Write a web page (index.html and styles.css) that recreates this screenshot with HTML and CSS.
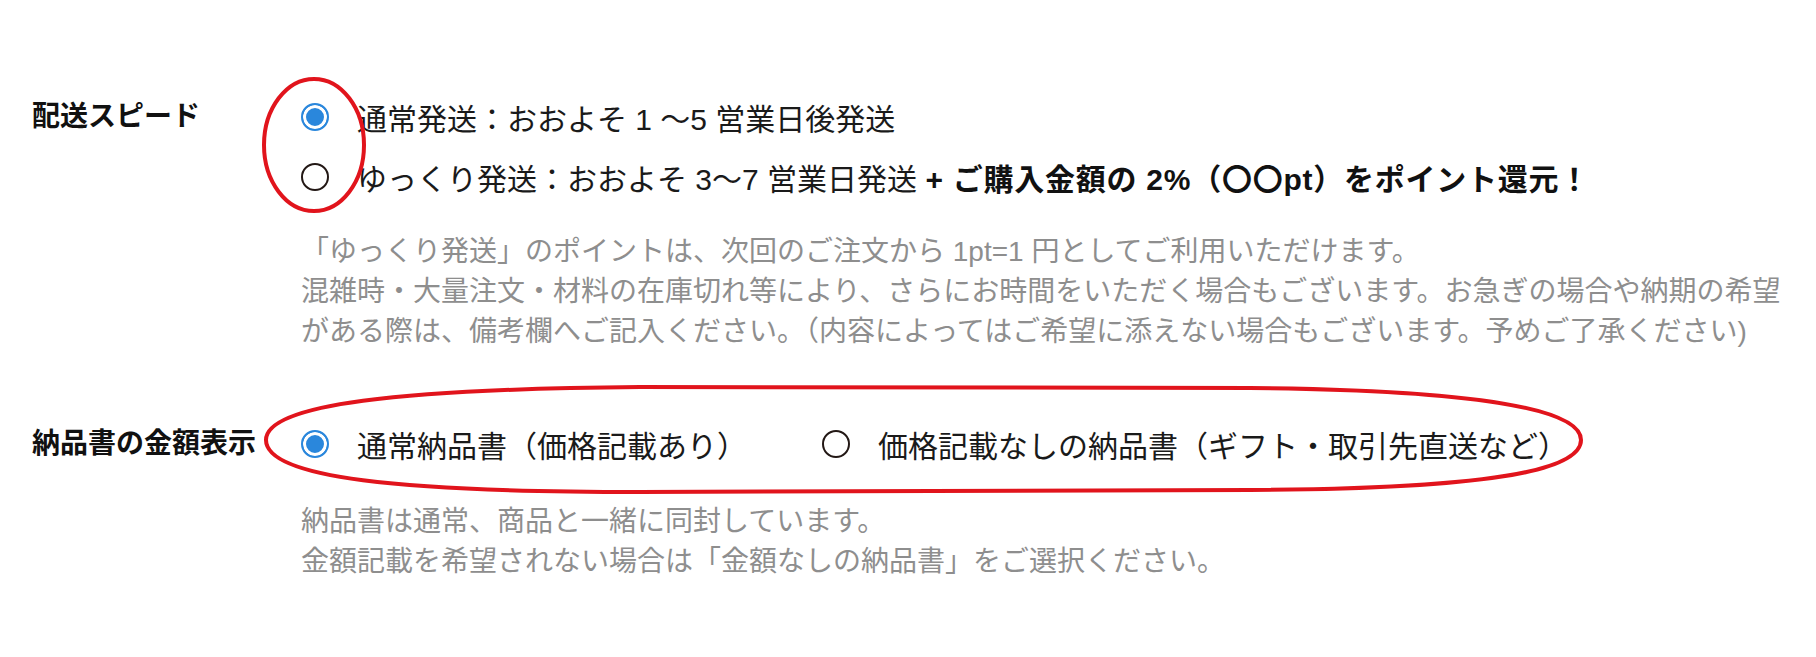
FILE: index.html
```html
<!DOCTYPE html>
<html lang="ja">
<head>
<meta charset="utf-8">
<title>配送オプション</title>
<link rel="stylesheet" href="styles.css">
</head>
<body>
<div class="page">
  <section class="field field-speed">
    <div class="label">配送スピード</div>
    <div class="content">
      <div class="options options-stack">
        <label class="opt"><input type="radio" name="speed" class="radio" checked><span class="txt">通常発送：おおよそ 1 〜5 営業日後発送</span></label>
        <label class="opt"><input type="radio" name="speed" class="radio"><span class="txt">ゆっくり発送：おおよそ 3〜7 営業日発送 <b class="em">+ ご購入金額の 2%（〇〇pt）をポイント還元！</b></span></label>
      </div>
      <p class="note">「ゆっくり発送」のポイントは、次回のご注文から 1pt=1 円としてご利用いただけます。<br>混雑時・大量注文・材料の在庫切れ等により、さらにお時間をいただく場合もございます。お急ぎの場合や納期の希望<br>がある際は、備考欄へご記入ください。（内容によってはご希望に添えない場合もございます。予めご了承ください)</p>
    </div>
  </section>

  <section class="field field-invoice">
    <div class="label">納品書の金額表示</div>
    <div class="content">
      <div class="options options-row">
        <label class="opt"><input type="radio" name="invoice" class="radio" checked><span class="txt">通常納品書（価格記載あり）</span></label>
        <label class="opt"><input type="radio" name="invoice" class="radio"><span class="txt">価格記載なしの納品書（ギフト・取引先直送など）</span></label>
      </div>
      <p class="note note-invoice">納品書は通常、商品と一緒に同封しています。<br>金額記載を希望されない場合は「金額なしの納品書」をご選択ください。</p>
    </div>
  </section>

  <svg class="annot" width="1816" height="657" viewBox="0 0 1816 657" aria-hidden="true">
    <ellipse cx="314" cy="145" rx="50" ry="66" fill="none" stroke="#e1141c" stroke-width="4"/>
    <path d="M266 440 C266 404 400 389 640 387 L1250 388 C1470 390 1581 408 1581 440 C1581 472 1480 489 1250 490 L640 492 C400 492 266 478 266 440 Z" fill="none" stroke="#e1141c" stroke-width="4"/>
  </svg>
</div>
</body>
</html>
```

FILE: styles.css
```css
* { box-sizing: border-box; }

html, body {
  margin: 0;
  padding: 0;
  background: #fff;
}

body {
  font-family: "Liberation Sans", "Noto Sans CJK JP", sans-serif;
  color: #1a1a1a;
}

.page {
  position: relative;
  width: 1816px;
  height: 657px;
  padding-top: 87px;
  padding-left: 32px;
}

.field {
  display: grid;
  grid-template-columns: 269px 1fr;
}

.field-invoice {
  margin-top: 62px;
}

.label {
  font-size: 28px;
  font-weight: 700;
  line-height: 60px;
  color: #111;
  white-space: nowrap;
}

.options {
  display: flex;
}

.options-stack {
  flex-direction: column;
}

.options-row {
  flex-direction: row;
  gap: 75px;
}

.opt {
  display: flex;
  align-items: center;
  gap: 28px;
  height: 60px;
  font-size: 30px;
  white-space: nowrap;
}

.radio {
  appearance: none;
  -webkit-appearance: none;
  margin: 0;
  flex: none;
  width: 28px;
  height: 28px;
  border-radius: 50%;
  border: 2px solid #231815;
  background: #fff;
}

.radio:checked {
  border-color: #2a87dc;
  background: #2a87dc;
  box-shadow: inset 0 0 0 3px #fff;
}

.em {
  font-weight: 700;
  color: #111;
  letter-spacing: 0.025em;
}

.note {
  margin: 25px 0 0;
  font-size: 28px;
  line-height: 40px;
  color: #8e8e8e;
  white-space: nowrap;
}

.note-invoice {
  margin-top: 28px;
}

.annot {
  position: absolute;
  left: 0;
  top: 0;
  pointer-events: none;
}
```
